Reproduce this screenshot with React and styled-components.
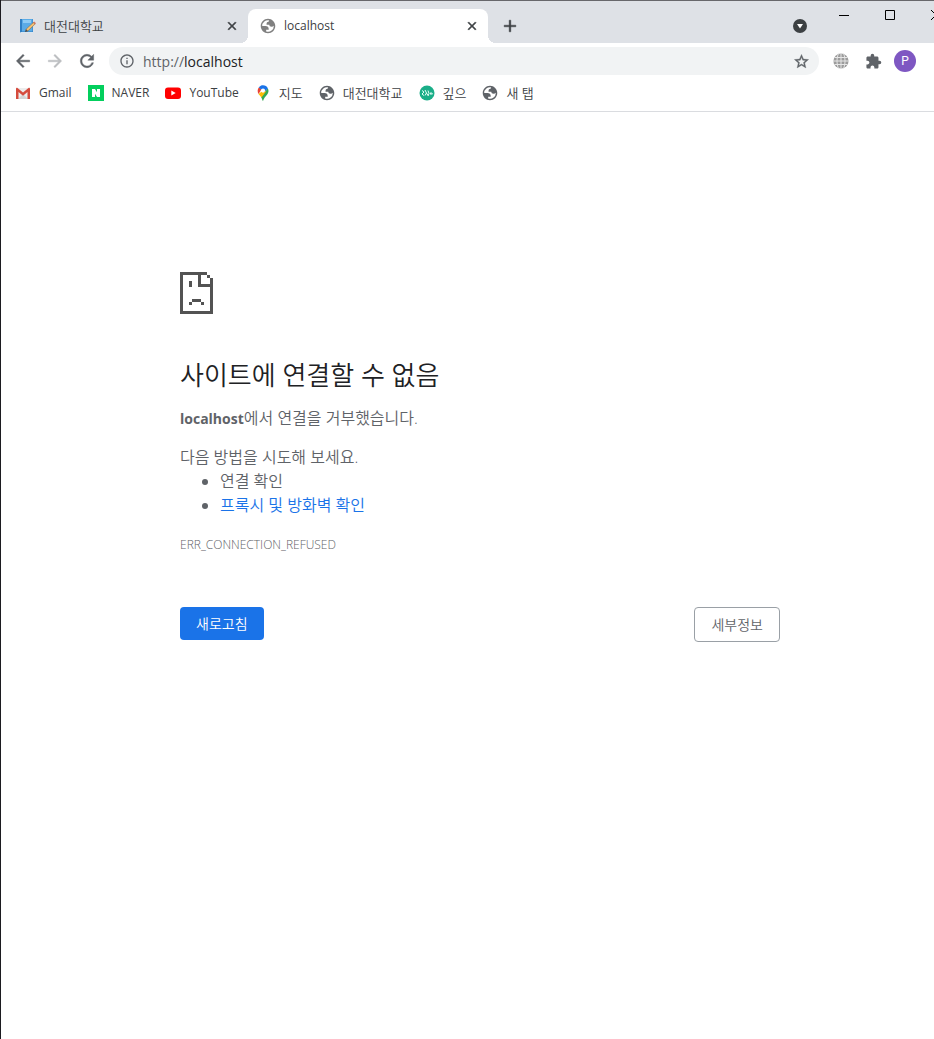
import React from "react";
import styled, { createGlobalStyle } from "styled-components";
import {
  MdArrowBack,
  MdArrowForward,
  MdRefresh,
  MdInfoOutline,
  MdStarBorder,
  MdExtension,
  MdClose,
  MdAdd,
} from "react-icons/md";

const GlobalStyle = createGlobalStyle`
  * { box-sizing: border-box; }
  body {
    margin: 0;
    overflow-x: hidden;
    background: #fff;
    font-family: "Open Sans", "Noto Sans CJK KR", sans-serif;
  }
  button, input { font: inherit; color: inherit; }
  button { border: 0; padding: 0; background: none; cursor: pointer; }
`;

/* The browser window runs past the right edge of the viewport. */
const Window = styled.div`
  display: flex;
  flex-direction: column;
  width: calc(100% + 26px);
  min-height: 100vh;
  border: solid #1c1b20;
  border-width: 0 1px;
  background: #fff;
`;

const TabStrip = styled.header`
  display: flex;
  align-items: flex-start;
  height: 43px;
  padding-left: 7px;
  border-top: 1px solid #67676b;
  background: #dee1e6;
`;

const Tab = styled.div`
  position: relative;
  display: flex;
  align-items: center;
  gap: 8px;
  width: 240px;
  height: 34px;
  margin-top: 8px;
  padding: 0 8px 0 12px;
  border-radius: 8px 8px 0 0;
  background: ${(p) => (p.$active ? "#fff" : "transparent")};
  color: #3c4043;

  &::before,
  &::after {
    content: "";
    display: ${(p) => (p.$active ? "block" : "none")};
    position: absolute;
    bottom: 0;
    width: 8px;
    height: 8px;
  }
  &::before {
    right: 100%;
    background: radial-gradient(circle at 0 0, transparent 8px, #fff 8px);
  }
  &::after {
    left: 100%;
    background: radial-gradient(circle at 100% 0, transparent 8px, #fff 8px);
  }
`;

const TabTitle = styled.button`
  flex: 1;
  font-size: ${(p) => (p.$korean ? "13px" : "12px")};
  font-weight: ${(p) => (p.$korean ? 350 : 400)};
  line-height: 16px;
  text-align: left;
`;

const IconButton = styled.button`
  display: flex;
  align-items: center;
  justify-content: center;
  flex: none;
  width: ${(p) => p.$size}px;
  height: ${(p) => p.$size}px;
  color: ${(p) => p.$color || "#5f6368"};
`;

/* Thickens the stock glyph; its empty bounding path stays unstroked. */
const BoldIconButton = styled(IconButton)`
  path { stroke-width: ${(p) => p.$stroke}; }
  path[fill="none"] { stroke: none; }
`;

const NewTab = styled(BoldIconButton)`
  margin: 11px 0 0 8px;
`;

const TabSearch = styled(IconButton)`
  margin: 11px 7px 0 auto;
`;

const WindowControls = styled.div`
  display: flex;
`;

const WindowButton = styled.button`
  display: flex;
  align-items: center;
  justify-content: center;
  width: 46px;
  height: 28px;
`;

const Toolbar = styled.div`
  display: flex;
  align-items: center;
  gap: 4px;
  height: 36px;
  padding: 0 40px 0 8px;
`;

const AddressBar = styled.div`
  display: flex;
  align-items: center;
  flex: 1;
  height: 28px;
  margin: 0 4px;
  padding: 0 4px 0 10px;
  border-radius: 14px;
  background: #f1f3f4;
  color: #5f6368;
  font-size: 14px;
`;

const Scheme = styled.label`
  margin-left: 8px;
`;

const AddressInput = styled.input`
  flex: 1;
  min-width: 0;
  padding: 0;
  border: 0;
  outline: 0;
  background: none;
  color: #202124;
`;

const Avatar = styled.span`
  display: grid;
  place-items: center;
  width: 22px;
  height: 22px;
  border-radius: 50%;
  background: #7e57c2;
  color: #fff;
  font: 12px Roboto, sans-serif;
`;

const BookmarkBar = styled.nav`
  display: flex;
  align-items: center;
  gap: 16px;
  height: 33px;
  padding: 0 14px 5px;
  border-bottom: 1px solid #dadce0;
`;

const Bookmark = styled.a`
  display: flex;
  align-items: center;
  gap: 8px;
  color: #3c4043;
  font-size: ${(p) => (p.$korean ? "13px" : "12px")};
  font-weight: ${(p) => (p.$korean ? 350 : 400)};
  line-height: 16px;
  text-decoration: none;
  white-space: nowrap;

  svg { flex: none; }
`;

const ErrorPage = styled.main`
  width: 100%;
  max-width: 600px;
  margin: 0 auto;
  padding: 160px 0 48px;
  color: #5f6368;
  font-size: 16px;
  font-weight: 350;
  line-height: 24px;

  > svg { display: block; }
`;

const Title = styled.h1`
  margin: 45px 0 15px;
  color: #202124;
  font-size: 26px;
  font-weight: 350;
  line-height: 32px;
`;

const Reason = styled.p`
  margin: 0 0 14px;

  strong { font-size: 14px; font-weight: 700; }
`;

const Suggestions = styled.section`
  p { margin: 0; }
  ul { margin: 0; padding-left: 40px; }
  a { color: #1a73e8; text-decoration: none; }
`;

const ErrorCode = styled.p`
  margin: 16px 0 50px;
  font-size: 12px;
`;

const Actions = styled.div`
  display: flex;
  align-items: flex-start;
  justify-content: space-between;
`;

const ActionButton = styled.button`
  padding: 8px 16px;
  border: ${(p) => (p.$primary ? "0" : "1px solid #9aa0a6")};
  border-radius: 4px;
  background: ${(p) => (p.$primary ? "#1a73e8" : "#fff")};
  color: ${(p) => (p.$primary ? "#fff" : "#5f6368")};
  font-size: 14px;
  line-height: 17px;
`;

const GlobeIcon = ({ color = "#5f6368" }) => (
  <svg width="16" height="16" viewBox="1 1 22 22" aria-hidden="true">
    <path
      fill={color}
      fillRule="evenodd"
      d="M12 2c5.52 0 10 4.48 10 10s-4.48 10-10 10S2 17.52 2 12 6.48 2 12 2zM4 12h4.4c3.407.022 4.922 1.73 4.543 5.127H9.488v2.47a8.004 8.004 0 0 0 10.498-8.083C19.327 12.504 18.332 13 17 13c-2.137 0-3.206-.916-3.206-2.75h-3.748c-.274-2.728.683-4.092 2.87-4.092 0-.975.327-1.597.811-1.97A8.004 8.004 0 0 0 4 12z"
    />
  </svg>
);

const NotebookIcon = () => (
  <svg width="16" height="16" viewBox="0 0 16 16" aria-hidden="true">
    <path fill="#2f7fc4" d="M0 1h13v14H1.500L0 14z" />
    <path fill="#5aabe6" d="M2 1h10.500v12.500H2z" />
    <path fill="#8ecbf4" d="M3 2h8v3H3z" />
    <path fill="#d8e6f0" d="M1 14h12v1H1z" />
    <path stroke="#80633d" strokeWidth="2.600" d="M6.500 12.500 14.500 5" />
    <path stroke="#f3c377" strokeWidth="2" d="M7 12 14 5.500" />
    <path fill="#4c4038" d="m5 14 .8-2.600 1.800 1.800z" />
    <path fill="#d47a60" d="m13 4.500 1.200-1 1.800 1.800-1.200 1.200z" />
  </svg>
);

const GmailIcon = () => (
  <svg width="16" height="16" viewBox="0 0 16 16" aria-hidden="true">
    <path fill="#ececec" d="M2 3h12v11H2z" />
    <path fill="#d5d5d5" d="m3 14 5-5 5 5z" />
    <path fill="#d54b3d" d="M1 4v10h2.500V7L8 10.800 12.500 7v7H15V4c0-1-.8-1.400-1.500-1L8 7.500 2.500 3C1.800 2.600 1 3 1 4z" />
  </svg>
);

const NaverIcon = () => (
  <svg width="16" height="16" viewBox="0 0 16 16" aria-hidden="true">
    <path fill="#03cf5d" d="M0 0h16v16H0z" />
    <path fill="#fff" d="M4 4h3l2 3.200V4h3v8H9L7 8.800V12H4z" />
  </svg>
);

const YouTubeIcon = () => (
  <svg width="16" height="16" viewBox="0 0 16 16" aria-hidden="true">
    <rect y="2.500" width="16" height="11.500" rx="3" fill="#f00" />
    <path fill="#fff" d="M6.300 5.600v5l4.400-2.500z" />
  </svg>
);

const MapsIcon = () => (
  <svg width="16" height="16" viewBox="0 0 16 16" aria-hidden="true">
    <path fill="#34a853" d="M8 16c-.7 0-.8-2.400-2-4L12.800 3.300c1.200 2.200.8 4.300-.6 6.100C10.600 11.500 9 12.700 8 16z" />
    <path fill="#fbbc04" d="M6.500 12.500 3.500 9 10 4l1 2.500z" />
    <path fill="#ea4335" d="M3.500 9C2.200 6.800 2.400 4 4 2.200L6.500 4.500z" />
    <path fill="#1a73e8" d="M3.800 2.300C5 .8 6.400.2 8 .2c2.200 0 4 1.200 4.900 3.200L9.500 7 6 4.500z" />
    <circle cx="8" cy="5.600" r="2.100" fill="#fff" />
  </svg>
);

const GreenBadgeIcon = () => (
  <svg width="16" height="16" viewBox="0 0 16 16" aria-hidden="true">
    <circle cx="8" cy="8" r="7.500" fill="#1aae88" />
    <path
      fill="none"
      stroke="#e9fff8"
      strokeWidth="1"
      d="m3 5.500 2 1.500-2 2 2 1.500M6 5l1.500 3L6 10.500M7.500 8 9 10.500M9 5.500l1 3L9 11M11 9l1-1.500L13.500 9H11"
    />
  </svg>
);

const GridGlobeIcon = () => (
  <svg width="16" height="16" viewBox="0 0 16 16" aria-hidden="true">
    <circle cx="8" cy="8" r="7.600" fill="#9c9c9c" />
    <path
      fill="none"
      stroke="#e6e6e6"
      strokeWidth="1"
      d="M8 0v16M0 8h16M1.500 4.500h13M1.500 11.500h13M5.500.5c-2 4.500-2 10.500 0 15M10.500.5c2 4.500 2 10.500 0 15"
    />
  </svg>
);

const TabSearchIcon = () => (
  <svg width="14" height="14" viewBox="0 0 14 14" aria-hidden="true">
    <circle cx="7" cy="7" r="7" fill="#3c4043" />
    <path fill="#fff" d="M4 5h6L7 9.500z" />
  </svg>
);

const MinimizeIcon = () => (
  <svg width="10" height="10" viewBox="0 0 10 10" aria-hidden="true">
    <path fill="#000" d="M0 5h10v1H0z" />
  </svg>
);

const MaximizeIcon = () => (
  <svg width="10" height="10" viewBox="0 0 10 10" aria-hidden="true">
    <path fill="none" stroke="#000" d="M.5.5h9v9h-9z" />
  </svg>
);

const CloseWindowIcon = () => (
  <svg width="10" height="10" viewBox="0 0 10 10" aria-hidden="true">
    <path stroke="#000" d="m0 0 10 10M10 0 0 10" />
  </svg>
);

const SadPageIcon = () => (
  <svg width="33" height="42" viewBox="0 0 11 14" shapeRendering="crispEdges" aria-hidden="true">
    <path
      fill="#535353"
      d="M0 0h9v1H7v3h3V2h1v12H0zM1 1v12h9V5H6V1zM9 1h1v1H9zM3 3h1v2H3zM4 9h3v1H4zM3 10h1v1H3zM7 10h1v1H7z"
      fillRule="evenodd"
    />
  </svg>
);

const bookmarks = [
  { label: "Gmail", icon: <GmailIcon /> },
  { label: "NAVER", icon: <NaverIcon /> },
  { label: "YouTube", icon: <YouTubeIcon /> },
  { label: "지도", icon: <MapsIcon />, korean: true },
  { label: "대전대학교", icon: <GlobeIcon />, korean: true },
  { label: "깊으", icon: <GreenBadgeIcon />, korean: true },
  { label: "새 탭", icon: <GlobeIcon />, korean: true },
];

export default function App() {
  return (
    <>
      <GlobalStyle />
      <Window>
        <TabStrip>
          <Tab>
            <NotebookIcon />
            <TabTitle $korean>대전대학교</TabTitle>
            <BoldIconButton $stroke={1} $size={16} $color="#3c4043" aria-label="Close tab">
              <MdClose size={14} />
            </BoldIconButton>
          </Tab>
          <Tab $active>
            <GlobeIcon color="#808080" />
            <TabTitle>localhost</TabTitle>
            <BoldIconButton $stroke={1} $size={16} $color="#3c4043" aria-label="Close tab">
              <MdClose size={14} />
            </BoldIconButton>
          </Tab>
          <NewTab $stroke={0.5} $size={28} $color="#3c4043" aria-label="New tab">
            <MdAdd size={20} />
          </NewTab>
          <TabSearch $size={28} aria-label="Search tabs">
            <TabSearchIcon />
          </TabSearch>
          <WindowControls>
            <WindowButton aria-label="Minimize"><MinimizeIcon /></WindowButton>
            <WindowButton aria-label="Maximize"><MaximizeIcon /></WindowButton>
            <WindowButton aria-label="Close"><CloseWindowIcon /></WindowButton>
          </WindowControls>
        </TabStrip>

        <Toolbar>
          <BoldIconButton $stroke={0.5} $size={28} aria-label="Back"><MdArrowBack size={20} /></BoldIconButton>
          <BoldIconButton $stroke={0.5} $size={28} $color="#bcbec1" aria-label="Forward"><MdArrowForward size={20} /></BoldIconButton>
          <BoldIconButton $stroke={0.5} $size={28} aria-label="Reload"><MdRefresh size={20} /></BoldIconButton>
          <AddressBar>
            <MdInfoOutline size={16} />
            <Scheme htmlFor="address">http://</Scheme>
            <AddressInput id="address" type="text" defaultValue="localhost" />
            <BoldIconButton $stroke={0.5} $size={28} aria-label="Bookmark this page"><MdStarBorder size={17} /></BoldIconButton>
          </AddressBar>
          <IconButton $size={28} aria-label="Web extension"><GridGlobeIcon /></IconButton>
          <IconButton $size={28} aria-label="Extensions"><MdExtension size={17} /></IconButton>
          <IconButton $size={28} aria-label="Profile"><Avatar>P</Avatar></IconButton>
        </Toolbar>

        <BookmarkBar>
          {bookmarks.map((b) => (
            <Bookmark key={b.label} href="#" $korean={b.korean}>
              {b.icon}
              {b.label}
            </Bookmark>
          ))}
        </BookmarkBar>

        <ErrorPage>
          <SadPageIcon />
          <Title>사이트에 연결할 수 없음</Title>
          <Reason><strong>localhost</strong>에서 연결을 거부했습니다.</Reason>
          <Suggestions>
            <p>다음 방법을 시도해 보세요.</p>
            <ul>
              <li>연결 확인</li>
              <li><a href="#">프록시 및 방화벽 확인</a></li>
            </ul>
          </Suggestions>
          <ErrorCode>ERR_CONNECTION_REFUSED</ErrorCode>
          <Actions>
            <ActionButton $primary>새로고침</ActionButton>
            <ActionButton>세부정보</ActionButton>
          </Actions>
        </ErrorPage>
      </Window>
    </>
  );
}
